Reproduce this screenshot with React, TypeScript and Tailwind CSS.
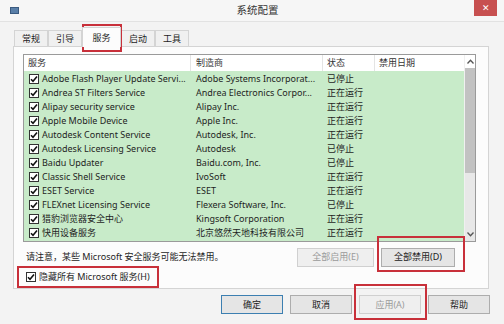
import React from "react";

const rows = [
  ["Adobe Flash Player Update Servi...", "Adobe Systems Incorporat...", "已停止"],
  ["Andrea ST Filters Service", "Andrea Electronics Corpor...", "正在运行"],
  ["Alipay security service", "Alipay Inc.", "正在运行"],
  ["Apple Mobile Device", "Apple Inc.", "正在运行"],
  ["Autodesk Content Service", "Autodesk, Inc.", "正在运行"],
  ["Autodesk Licensing Service", "Autodesk", "已停止"],
  ["Baidu Updater", "Baidu.com, Inc.", "已停止"],
  ["Classic Shell Service", "IvoSoft", "正在运行"],
  ["ESET Service", "ESET", "正在运行"],
  ["FLEXnet Licensing Service", "Flexera Software, Inc.", "已停止"],
  ["猎豹浏览器安全中心", "Kingsoft Corporation", "正在运行"],
  ["快用设备服务", "北京悠然天地科技有限公司", "正在运行"],
];

function Check() {
  return (
    <span className="w-[10px] h-[10px] border border-[#333] bg-white flex items-center justify-center shrink-0">
      <svg width="8" height="8" viewBox="0 0 8 8">
        <path d="M1 4.2 L3 6.2 L7 1.5" stroke="#111" strokeWidth="1.6" fill="none" />
      </svg>
    </span>
  );
}

function Tab({ label, active }: { label: string; active?: boolean }) {
  return (
    <div
      className={
        active
          ? "h-[20px] w-[39px] justify-center bg-[#fcfcfc] border border-b-0 border-[#d4d4d4] flex items-center -mb-px relative z-10"
          : "h-[16px] w-[34px] justify-center bg-[#f0f0f0] border border-b-0 border-[#d4d4d4] flex items-center"
      }
    >
      {label}
    </div>
  );
}

function Btn({ label, disabled, primary, w = "w-[62px]" }: { label: string; disabled?: boolean; primary?: boolean; w?: string }) {
  return (
    <div
      className={
        w +
        " h-[19px] flex items-center justify-center border " +
        (primary ? "border-[#3c7fb1] bg-[#e5e5e5] " : "border-[#adadad] bg-[#e5e5e5] ") +
        (disabled ? "text-[#9a9a9a] border-[#d0d0d0] bg-[#efefef]" : "text-[#222]")
      }
    >
      {label}
    </div>
  );
}

export default function App() {
  return (
    <div
      className="w-[504px] h-[324px] bg-[#f3f3f3] relative overflow-hidden text-[9px] text-[#1e1e1e]"
      style={{ fontFamily: '"Noto Sans", "Noto Sans CJK SC", sans-serif' }}
    >
      {/* title bar */}
      <div className="h-[22px] flex items-center border-b border-[#e2e2e2] bg-[#f6f6f6]">
        <div className="ml-[10px] w-[9px] h-[7px] bg-[#5a7fa8] border border-[#3a5a80]" />
        <div className="flex-1 text-center text-[10.5px] text-[#333] pl-[22px]">系统配置</div>
        <div className="w-[23px] h-[16px] self-start mr-[7px] bg-[#c75050] text-white flex items-center justify-center text-[9px]">
          ✕
        </div>
      </div>

      {/* tabs */}
      <div className="flex items-end ml-[14px] mt-[5px] h-[19px]">
        <Tab label="常规" />
        <Tab label="引导" />
        <Tab label="服务" active />
        <Tab label="启动" />
        <Tab label="工具" />
      </div>

      {/* panel */}
      <div className="ml-[13px] w-[476px] h-[243px] border border-[#d4d4d4] bg-[#fcfcfc] flex flex-col pl-[9px] pt-[7px]">
        <div className="w-[453px] h-[188px] border border-[#9a9a9a] bg-white flex">
          <div className="flex-1 flex flex-col">
            <div className="h-[16px] flex items-center text-[#333] bg-white">
              <div className="w-[167px] pl-[4px] border-r border-[#e4e4e4] h-full flex items-center">服务</div>
              <div className="w-[132px] pl-[5px] border-r border-[#e4e4e4] h-full flex items-center">制造商</div>
              <div className="w-[52px] pl-[4px] border-r border-[#e4e4e4] h-full flex items-center">状态</div>
              <div className="flex-1 pl-[4px] h-full flex items-center">禁用日期</div>
            </div>
            <div className="flex-1 bg-[#c8ebc9] pt-[1px]">
              {rows.map((r) => (
                <div key={r[0]} className="h-[14px] flex items-center whitespace-nowrap">
                  <div className="w-[167px] pl-[5px] flex items-center gap-[3px] overflow-hidden">
                    <Check />
                    <span>{r[0]}</span>
                  </div>
                  <div className="w-[132px] pl-[5px] overflow-hidden">{r[1]}</div>
                  <div className="w-[52px] pl-[4px]">{r[2]}</div>
                </div>
              ))}
            </div>
          </div>
          {/* scrollbar */}
          <div className="w-[11px] bg-[#e8e8e8] flex flex-col items-center border-l border-[#f0f0f0]">
            <div className="h-[13px] w-full bg-white flex items-center justify-center">
              <svg width="7" height="5" viewBox="0 0 7 5">
                <path d="M0.5 4.5 L3.5 1.2 L6.5 4.5" stroke="#555" strokeWidth="1.3" fill="none" />
              </svg>
            </div>
            <div className="w-full h-[105px] bg-[#c2c2c2]" />
            <div className="flex-1" />
            <div className="h-[13px] w-full flex items-center justify-center">
              <svg width="7" height="5" viewBox="0 0 7 5">
                <path d="M0.5 0.5 L3.5 3.8 L6.5 0.5" stroke="#555" strokeWidth="1.3" fill="none" />
              </svg>
            </div>
          </div>
        </div>

        <div className="flex items-center mt-[6px] h-[18px]">
          <div className="flex-1 pl-[3px]">请注意，某些 Microsoft 安全服务可能无法禁用。</div>
          <Btn label="全部启用(E)" disabled w="w-[77px]" />
          <div className="w-[7px]" />
          <Btn label="全部禁用(D)" w="w-[74px]" />
          <div className="w-[33px]" />
        </div>

        <div className="flex items-center gap-[3px] mt-[4px] pl-[3px]">
          <Check />
          <span>隐藏所有 Microsoft 服务(H)</span>
        </div>
      </div>

      {/* bottom buttons */}
      <div className="flex justify-end gap-[7px] mr-[14px] mt-[6px]">
        <Btn label="确定" primary />
        <Btn label="取消" />
        <Btn label="应用(A)" disabled />
        <Btn label="帮助" />
      </div>

      {/* red annotation boxes */}
      <div className="absolute left-[82px] top-[24px] w-[40px] h-[28px] border-2 border-[#c8303a] pointer-events-none" />
      <div className="absolute left-[377px] top-[236px] w-[88px] h-[36px] border-2 border-[#c8303a] pointer-events-none" />
      <div className="absolute left-[17px] top-[266px] w-[142px] h-[22px] border-2 border-[#c8303a] pointer-events-none" />
      <div className="absolute left-[354px] top-[284px] w-[73px] h-[36px] border-2 border-[#c8303a] pointer-events-none" />
    </div>
  );
}
